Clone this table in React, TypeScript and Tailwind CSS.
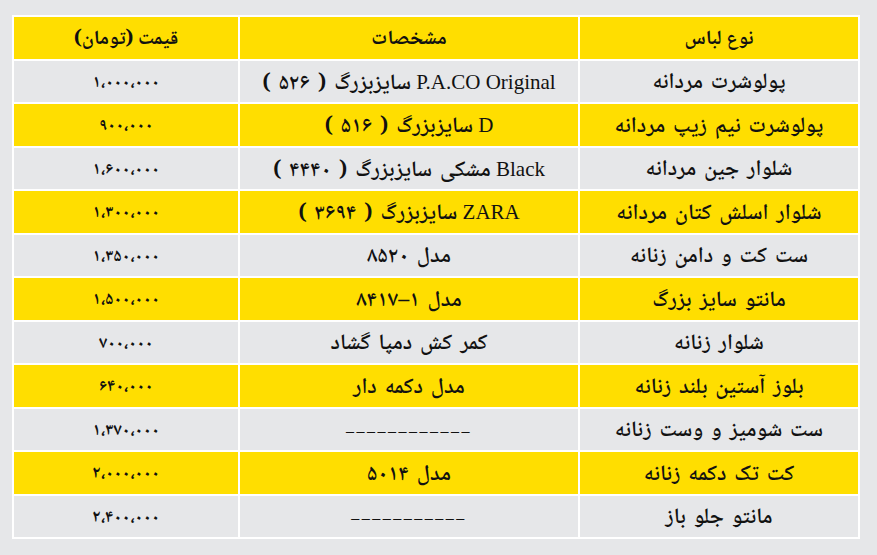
import React from "react";

type Row = { kind: string; latin?: string; spec: string; price: string };

const ROWS: Row[] = [
  { kind: "پولوشرت مردانه", latin: "P.A.CO Original", spec: "سایزبزرگ ( ۵۲۶ )", price: "۱،۰۰۰،۰۰۰" },
  { kind: "پولوشرت نیم زیپ مردانه", latin: "D", spec: "سایزبزرگ ( ۵۱۶ )", price: "۹۰۰،۰۰۰" },
  { kind: "شلوار جین مردانه", latin: "Black", spec: "مشکی سایزبزرگ ( ۴۴۴۰ )", price: "۱،۶۰۰،۰۰۰" },
  { kind: "شلوار اسلش کتان مردانه", latin: "ZARA", spec: "سایزبزرگ ( ۳۶۹۴ )", price: "۱،۳۰۰،۰۰۰" },
  { kind: "ست کت و دامن زنانه", spec: "مدل ۸۵۲۰", price: "۱،۳۵۰،۰۰۰" },
  { kind: "مانتو سایز بزرگ", spec: "مدل ۱–۸۴۱۷", price: "۱،۵۰۰،۰۰۰" },
  { kind: "شلوار زنانه", spec: "کمر کش دمپا گشاد", price: "۷۰۰،۰۰۰" },
  { kind: "بلوز آستین بلند زنانه", spec: "مدل دکمه دار", price: "۶۴۰،۰۰۰" },
  { kind: "ست شومیز و وست زنانه", spec: "", price: "۱،۳۷۰،۰۰۰" },
  { kind: "کت تک دکمه زنانه", spec: "مدل ۵۰۱۴", price: "۲،۰۰۰،۰۰۰" },
  { kind: "مانتو جلو باز", spec: "", price: "۲،۴۰۰،۰۰۰" },
];

// dash placeholders for the empty spec cells
const DASHES: Record<number, number> = { 8: 12, 10: 11 };

const FA = "font-['Noto_Naskh_Arabic','Noto_Sans_Arabic','DejaVu_Sans',sans-serif]";
const LATIN = "font-['Liberation_Serif',serif] font-normal";

function Cell({
  children,
  yellow,
  className = "",
}: {
  children: React.ReactNode;
  yellow: boolean;
  className?: string;
}) {
  return (
    <div
      className={`flex h-[41.5px] items-center justify-center pt-[4px] leading-none text-[#111] ${className} ${
        yellow ? "bg-[#ffde00]" : "bg-[#e6e7e9]"
      }`}
    >
      {children}
    </div>
  );
}

export default function App() {
  return (
    <div className={`h-[555px] w-[877px] bg-[#e6e7e9] pl-[12px] pt-[15px] ${FA}`}>
      <div
        dir="rtl"
        className="grid w-[848px] grid-cols-[278px_338px_224px] gap-[2px] bg-white p-[2px]"
      >
        <Cell yellow className="text-[20px] font-bold">نوع لباس</Cell>
        <Cell yellow className="text-[20px] font-bold">مشخصات</Cell>
        <Cell yellow className="text-[20px] font-bold">قیمت (تومان)</Cell>
        {ROWS.map((r, i) => {
          const yellow = i % 2 === 1;
          return (
            <React.Fragment key={i}>
              <Cell yellow={yellow} className="text-[22px] font-semibold [word-spacing:3px]">
                {r.kind}
              </Cell>
              <Cell yellow={yellow} className="text-[22px] font-semibold [word-spacing:3px]">
                {DASHES[i] ? (
                  <span className={`${LATIN} text-[16px] tracking-[2.5px]`}>{"–".repeat(DASHES[i])}</span>
                ) : (
                  <span>
                    {r.latin && <span className={`${LATIN} text-[21px] [word-spacing:0px]`}>{r.latin} </span>}
                    <span>{r.spec}</span>
                  </span>
                )}
              </Cell>
              <Cell yellow={yellow} className="text-[17px] font-bold">{r.price}</Cell>
            </React.Fragment>
          );
        })}
      </div>
    </div>
  );
}
